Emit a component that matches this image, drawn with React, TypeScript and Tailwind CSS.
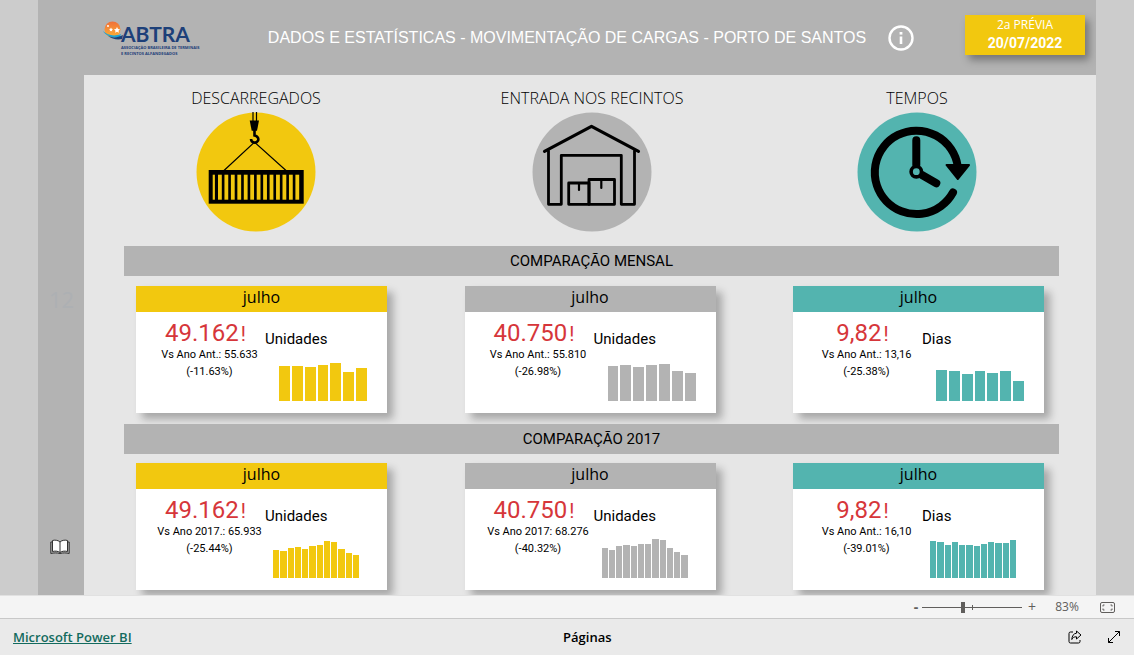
import React from 'react'
import clsx from 'clsx'

type Tone = 'yellow' | 'gray' | 'teal'

interface Kpi {
  tone: Tone
  value: string
  compare: string
  percent: string
  unit: string
  bars: number[]
}

const toneBg: Record<Tone, string> = {
  yellow: 'bg-[#f2c80f]',
  gray: 'bg-[#b3b3b3]',
  teal: 'bg-[#53b4af]'
}

const monthly: Kpi[] = [
  { tone: 'yellow', value: '49.162', compare: 'Vs Ano Ant.: 55.633', percent: '(-11.63%)', unit: 'Unidades', bars: [35, 35, 34, 36, 38, 29, 33] },
  { tone: 'gray', value: '40.750', compare: 'Vs Ano Ant.: 55.810', percent: '(-26.98%)', unit: 'Unidades', bars: [35, 36, 34, 36, 37, 30, 28] },
  { tone: 'teal', value: '9,82', compare: 'Vs Ano Ant.: 13,16', percent: '(-25.38%)', unit: 'Dias', bars: [31, 30, 27, 30, 28, 30, 20] }
]

const since2017: Kpi[] = [
  { tone: 'yellow', value: '49.162', compare: 'Vs Ano 2017.: 65.933', percent: '(-25.44%)', unit: 'Unidades', bars: [28, 27, 30, 31, 29, 32, 33, 37, 36, 29, 25, 23] },
  { tone: 'gray', value: '40.750', compare: 'Vs Ano 2017: 68.276', percent: '(-40.32%)', unit: 'Unidades', bars: [30, 28, 32, 33, 32, 34, 34, 39, 38, 30, 26, 23] },
  { tone: 'teal', value: '9,82', compare: 'Vs Ano Ant.: 16,10', percent: '(-39.01%)', unit: 'Dias', bars: [37, 36, 33, 36, 33, 33, 32, 34, 36, 35, 35, 38] }
]

function Logo() {
  return (
    <div className="flex w-[155px] items-start pt-0.5">
      <svg width="20" height="22" viewBox="0 0 20 22" className="shrink-0">
        <defs>
          <linearGradient id="sun" x1="0" y1="0" x2="0" y2="1">
            <stop offset="0" stopColor="#f0703a" />
            <stop offset="1" stopColor="#fbb034" />
          </linearGradient>
        </defs>
        <circle cx="9.5" cy="8.5" r="8" fill="url(#sun)" />
        <path d="M0 10c4 4 11 6 18 3l-1 3C10 18 3 15 0 10z" fill="#1ba3d6" />
        <path d="M5 15c5 2 9 2 15-1l-1 4c-5 1-10 0-14-3z" fill="#1d4079" />
        <path d="M14 6l1 2 2 .3-1.500 1.400.4 2.100-1.900-1-1.900 1 .4-2.100L11 8.300l2-.3zM8 6.500l.6 1.300 1.400.2-1 1 .2 1.400L8 9.800l-1.200.6.2-1.400-1-1 1.400-.2z" fill="#fff" />
        <circle cx="5" cy="5" r="1" fill="#fff" />
      </svg>
      <div className="-ml-0.5 pt-0.5 text-[#1d4079]">
        <div className="font-['Lato'] text-[21px] leading-[22px] font-bold">ABTRA</div>
        <div className="font-['Open_Sans'] text-[4px] leading-[6px] font-bold whitespace-nowrap">
          ASSOCIAÇÃO BRASILEIRA DE TERMINAIS
          <br />
          E RECINTOS ALFANDEGADOS
        </div>
      </div>
    </div>
  )
}

function ContainerIcon() {
  const slots = Array.from({ length: 13 }, (_, i) => 22 + i * 6.45)
  return (
    <svg viewBox="0 0 120 120" className="size-[120px]">
      <circle cx="60" cy="60" r="59.5" fill="#f2c80f" />
      <path d="M57 0v9M60.500 0v9" stroke="#000" strokeWidth="1.200" />
      <path d="M53.700 8.500H63l-2 10.200h-5.300z" />
      <path d="M58.500 18v5.500c3 .5 4.500 3 3.500 5.200-1.500 3-6.800 2.500-7-1.700" fill="none" stroke="#000" strokeWidth="2.600" />
      <path d="M28 58.500L57.500 31h2L90 58.500" fill="none" stroke="#000" strokeWidth="1.200" />
      <rect x="12.700" y="58" width="95" height="33.700" />
      <g fill="#f2c80f">
        <rect x="16.700" y="62.700" width="2.200" height="25" />
        {slots.map((x) => (
          <rect key={x} x={x} y="62.700" width="3.800" height="25" />
        ))}
      </g>
    </svg>
  )
}

function WarehouseIcon() {
  return (
    <svg viewBox="0 0 120 120" className="size-[120px]">
      <circle cx="60" cy="60" r="59.5" fill="#b3b3b3" />
      <g fill="none" stroke="#000" strokeWidth="2.800" strokeLinejoin="round" strokeLinecap="round">
        <path d="M12.500 39.300L59.500 14.300 106.500 39.300" strokeWidth="3.200" />
        <path d="M16.500 39v53.300h12.800v-49h60v49h13.200V39" />
        <rect x="36.700" y="71" width="20.300" height="21.300" />
        <rect x="57" y="67.500" width="25.500" height="24.800" />
        <path d="M47 71v7M69.300 67.500V76" strokeWidth="2.200" />
      </g>
    </svg>
  )
}

function ClockIcon() {
  return (
    <svg viewBox="0 0 120 120" className="size-[120px]">
      <circle cx="60" cy="60" r="59.5" fill="#53b4af" />
      <g fill="none" stroke="#000" strokeWidth="8" strokeLinecap="round">
        <path d="M96 80.500A41.700 41.700 0 1 1 100.700 54" />
        <path d="M59.300 53V28.300M65 63l14.300 8.300" />
      </g>
      <path d="M89.500 53h22.500L100.700 67z" stroke="#000" strokeWidth="2" strokeLinejoin="round" />
      <circle cx="59.300" cy="59.700" r="5.200" fill="#53b4af" stroke="#000" strokeWidth="3.600" />
    </svg>
  )
}

function Topic({ label, children }: { label: string; children: React.ReactNode }) {
  return (
    <div className="flex flex-col items-center gap-0.5">
      <h2 className="text-base leading-6 font-light whitespace-nowrap text-black">{label}</h2>
      {children}
    </div>
  )
}

function KpiCard({ item }: { item: Kpi }) {
  return (
    <article className="w-[251px] bg-white shadow-[6px_6px_8px_rgba(0,0,0,0.28)]">
      <h4 className={clsx('h-[26px] text-center text-base leading-[22px] font-normal text-black', toneBg[item.tone])}>julho</h4>
      <div className="flex h-[101px] font-['Roboto',sans-serif] text-black">
        <div className="w-[129px] pt-2 pl-[18px] text-center whitespace-nowrap">
          <p className="pr-2 text-2xl leading-[26px] text-[#d6363a]">
            {item.value}
            <span className="ml-0.5 text-xl">!</span>
          </p>
          <p className="text-[11px] leading-[14px]">{item.compare}</p>
          <p className="text-[11px] leading-5">{item.percent}</p>
        </div>
        <div className="flex flex-1 flex-col justify-between pt-4 pb-3">
          <p className="text-[15px] leading-[22px]">{item.unit}</p>
          <div className={clsx('flex items-end', item.bars.length > 7 ? 'ml-2 w-[86px] gap-px' : 'ml-[14px] w-[88px] gap-0.5')}>
            {item.bars.map((h, i) => (
              <div key={i} className={clsx('flex-1', toneBg[item.tone])} style={{ height: h }} />
            ))}
          </div>
        </div>
      </div>
    </article>
  )
}

function Section({ title, items, gap }: { title: string; items: Kpi[]; gap: string }) {
  return (
    <section>
      <h3 className="h-[30px] bg-[#b3b3b3] text-center font-['Roboto',sans-serif] text-[15px] leading-[30px] text-black">{title}</h3>
      <div className={clsx('flex justify-between pr-[15px] pl-3', gap)}>
        {items.map((item, i) => (
          <KpiCard key={i} item={item} />
        ))}
      </div>
    </section>
  )
}

function ZoomBar() {
  return (
    <div className="flex h-6 items-center justify-end border-t border-b border-t-[#e1e1e1] border-b-[#c8c8c8] bg-[#f4f4f4] pr-[19px] text-[#605e5c]">
      <button aria-label="Reduzir" className="w-3 text-sm leading-5 font-bold">-</button>
      <div className="relative flex h-5 w-[100px] items-center">
        <input
          type="range"
          aria-label="Zoom"
          min={0}
          max={100}
          defaultValue={41}
          className="h-px w-full appearance-none bg-[#605e5c] [&::-webkit-slider-thumb]:h-[11px] [&::-webkit-slider-thumb]:w-1 [&::-webkit-slider-thumb]:appearance-none [&::-webkit-slider-thumb]:bg-[#605e5c]"
        />
        <span className="absolute top-2 left-1/2 h-[5px] w-px bg-[#605e5c]" />
      </div>
      <button aria-label="Ampliar" className="w-5 text-sm leading-5">+</button>
      <button className="ml-3 w-[26px] text-xs leading-5">83%</button>
      <button aria-label="Ajustar à página" className="ml-5">
        <svg width="15" height="11" viewBox="0 0 15 11" fill="none" stroke="currentColor">
          <rect x=".5" y=".5" width="14" height="10" rx="1.500" />
          <path d="M3 4.500V3h1.500M10.500 3H12v1.500M12 6.500V8h-1.500M4.500 8H3V6.500" />
        </svg>
      </button>
    </div>
  )
}

export default function App() {
  return (
    <div className="flex min-h-screen flex-col bg-[#cccccc] font-['Open_Sans','Noto_Sans',sans-serif]">
      <div className="mx-[38px] flex flex-1 flex-col overflow-hidden bg-[#b3b3b3]">
        <header className="flex h-[75px] items-center pr-[11px] pl-[65px]">
          <Logo />
          <h1 className="w-[618px] text-center font-['Liberation_Sans',Arial,sans-serif] text-base leading-6 whitespace-nowrap text-white">
            DADOS E ESTATÍSTICAS - MOVIMENTAÇÃO DE CARGAS - PORTO DE SANTOS
          </h1>
          <button aria-label="Informações" className="ml-3 text-white">
            <svg width="26" height="26" viewBox="0 0 26 26" fill="none" stroke="currentColor">
              <circle cx="13" cy="13" r="11.500" strokeWidth="2.400" />
              <path d="M13 11.500V19" strokeWidth="2.600" />
              <path d="M13 7v2.600" strokeWidth="2.800" />
            </svg>
          </button>
          <div className="mb-[5px] ml-auto h-10 w-[120px] bg-[#f2c80f] text-center text-white shadow-[4px_5px_8px_rgba(0,0,0,0.35)]">
            <p className="text-xs leading-[19px]">2a PRÉVIA</p>
            <p className="font-['Roboto',sans-serif] text-sm leading-[19px] font-bold">20/07/2022</p>
          </div>
        </header>

        <div className="flex flex-1">
          <aside className="relative w-[46px] shrink-0">
            <span className="absolute top-[208px] left-[11px] text-[22px] text-[#adb0b3]">12</span>
            <button aria-label="Páginas do relatório" className="absolute bottom-10 left-3">
              <svg width="20" height="16" viewBox="0 0 20 16" stroke="#333">
                <path d="M10 3C8 1 4.500.8 2.500 1.500v11c2.500-.7 5.500-.5 7.500 1 2-1.500 5-1.700 7.500-1v-11C15.500.8 12 1 10 3z" fill="#fff" />
                <path d="M10 3v10.500M2.500 3H.8v11.500c3-.7 6-.8 9.200 0 3.200-.8 6.200-.7 9.200 0V3h-1.700" fill="none" />
              </svg>
            </button>
          </aside>

          <main className="flex-1 overflow-hidden bg-[#e6e6e6] pt-[11px] pr-[37px] pb-[5px] pl-10">
            <div className="mb-[14px] grid grid-cols-[264px_1fr_242px] pr-[21px]">
              <Topic label="DESCARREGADOS">
                <ContainerIcon />
              </Topic>
              <Topic label="ENTRADA NOS RECINTOS">
                <WarehouseIcon />
              </Topic>
              <Topic label="TEMPOS">
                <ClockIcon />
              </Topic>
            </div>
            <div className="flex flex-col gap-[11px]">
              <Section title="COMPARAÇÃO MENSAL" items={monthly} gap="pt-[10px]" />
              <Section title="COMPARAÇÃO 2017" items={since2017} gap="pt-[9px]" />
            </div>
          </main>
        </div>
      </div>

      <ZoomBar />

      <footer className="flex h-9 items-center bg-[#eaeaea] px-[13px] text-[13px] leading-5">
        <a href="#" className="font-semibold text-[#136b5e] underline">Microsoft Power BI</a>
        <p className="flex-1 text-center font-semibold text-black">Páginas</p>
        <div className="flex w-[78px] justify-end gap-[25px] text-black">
          <button aria-label="Compartilhar">
            <svg width="14" height="14" viewBox="0 0 14 14" fill="none" stroke="currentColor" strokeLinejoin="round">
              <path d="M5 2H2.500Q1 2 1 3.500v8Q1 13 2.500 13h8q1.500 0 1.500-1.500V10" />
              <path d="M8.500 1l4.500 4-4.500 4V6.800C6 6.700 4.800 7.500 3.800 9.500 4 6 5.500 3.500 8.500 3.200z" />
            </svg>
          </button>
          <button aria-label="Tela inteira">
            <svg width="14" height="14" viewBox="0 0 14 14" fill="none" stroke="currentColor">
              <path d="M1.500 12.500l11-11M8 1.500h4.500V6M1.500 8v4.500H6" />
            </svg>
          </button>
        </div>
      </footer>
    </div>
  )
}
